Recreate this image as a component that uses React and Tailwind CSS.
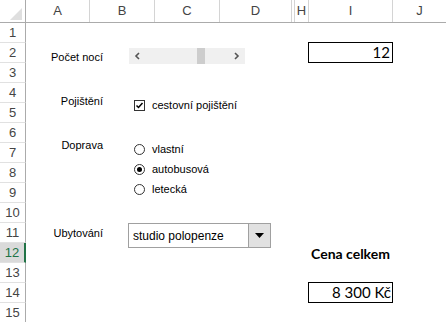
import React from "react";

const cols = [
  { key: "A", w: "w-[64px]" },
  { key: "B", w: "w-[65px]" },
  { key: "C", w: "w-[65px]" },
  { key: "D", w: "w-[72px]" },
  { key: "", w: "w-[3px]" },
  { key: "H", w: "w-[14px]" },
  { key: "I", w: "w-[84px]" },
  { key: "J", w: "flex-1" },
];

const rows = Array.from({ length: 15 }, (_, i) => i + 1);

function Radio({ checked, label }) {
  return (
    <div className="flex items-center h-[20px]">
      <span className="w-[11px] h-[11px] rounded-full border border-[#333] bg-white flex items-center justify-center">
        {checked && <span className="w-[5px] h-[5px] rounded-full bg-black" />}
      </span>
      <span className="ml-[7px] text-[11px] text-black">{label}</span>
    </div>
  );
}

export default function App() {
  return (
    <div className="w-[446px] h-[322px] bg-white overflow-hidden font-['Liberation_Sans',Arial,sans-serif] text-black">
      {/* column headers */}
      <div className="flex h-[23px] border-b border-[#ababab]">
        <div className="w-[26px] border-r border-[#ababab] relative">
          <div className="absolute right-[3px] bottom-[2px] w-0 h-0 border-l-[12px] border-l-transparent border-b-[12px] border-b-[#dfdfdf]" />
        </div>
        {cols.map((c, i) => (
          <div
            key={i}
            className={`${c.w} ${c.key === "J" ? "" : "border-r border-[#d4d4d4]"} flex items-center justify-center text-[13px] text-[#444]`}
          >
            {c.key}
          </div>
        ))}
      </div>

      <div className="flex">
        {/* row headers */}
        <div className="w-[26px] flex flex-col">
          {rows.map((r) => (
            <div
              key={r}
              className={`h-[20px] border-b border-[#e1e1e1] flex items-center justify-center text-[13px] ${
                r === 12
                  ? "bg-[#dadada] text-[#217346] border-r-2 border-r-[#217346]"
                  : "text-[#444] border-r border-r-[#ababab]"
              }`}
            >
              {r}
            </div>
          ))}
        </div>

        {/* sheet */}
        <div className="flex-1 relative">
          <div className="flex flex-col">
            {rows.map((r) => (
              <div key={r} className="h-[20px] flex">
                <div className="w-[282px] shrink-0" />
                {r === 2 && (
                  <div className="w-[85px] h-[21px] -mt-[1px] border border-black flex items-center justify-end pr-[2px] font-['Lato',sans-serif] text-[15px]">
                    12
                  </div>
                )}
                {r === 12 && (
                  <div className="w-[85px] h-[20px] flex items-center justify-center font-['Lato',sans-serif] font-bold text-[14px]">
                    Cena celkem
                  </div>
                )}
                {r === 14 && (
                  <div className="w-[85px] h-[21px] -mt-[1px] border border-black flex items-center justify-end pr-[1px] font-['Lato',sans-serif] text-[15px]">
                    8 300 Kč
                  </div>
                )}
              </div>
            ))}
          </div>

          {/* floating form controls */}
          <div className="absolute left-0 top-[27px] w-[77px] text-right text-[11px] leading-[14px]">Počet nocí</div>
          <div className="absolute left-[103px] top-[25px] w-[116px] h-[16px] bg-[#f0f0f0] flex items-center justify-between px-[5px]">
            <svg width="6" height="8" viewBox="0 0 6 8">
              <path d="M5 1 L2 4 L5 7" fill="none" stroke="#555" strokeWidth="1.6" />
            </svg>
            <svg width="6" height="8" viewBox="0 0 6 8">
              <path d="M1 1 L4 4 L1 7" fill="none" stroke="#555" strokeWidth="1.6" />
            </svg>
            <div className="absolute left-[68px] top-0 w-[8px] h-[16px] bg-[#cdcdcd]" />
          </div>

          <div className="absolute left-0 top-[71px] w-[77px] text-right text-[11px] leading-[14px]">Pojištění</div>
          <div className="absolute left-[108px] top-[75px] flex items-center h-[14px]">
            <span className="w-[11px] h-[11px] border border-[#333] bg-white flex items-center justify-center">
              <svg width="9" height="9" viewBox="0 0 9 9">
                <path d="M1.5 4.5 L3.5 6.5 L7.5 2" fill="none" stroke="#000" strokeWidth="1.5" />
              </svg>
            </span>
            <span className="ml-[7px] text-[11px]">cestovní pojištění</span>
          </div>

          <div className="absolute left-0 top-[115px] w-[77px] text-right text-[11px] leading-[14px]">Doprava</div>
          <div className="absolute left-[108px] top-[116px] flex flex-col">
            <Radio label="vlastní" />
            <Radio checked label="autobusová" />
            <Radio label="letecká" />
          </div>

          <div className="absolute left-0 top-[203px] w-[77px] text-right text-[11px] leading-[14px]">Ubytování</div>
          <div className="absolute left-[102px] top-[200px] w-[143px] h-[25px] border border-[#a0a0a0] bg-white flex">
            <div className="flex-1 flex items-center pl-[4px] text-[12px]">studio polopenze</div>
            <div className="w-[22px] h-full border-l border-[#a0a0a0] bg-[#e1e1e1] flex items-center justify-center">
              <svg width="9" height="6" viewBox="0 0 9 6">
                <path d="M0 0 L9 0 L4.5 5 Z" fill="#000" />
              </svg>
            </div>
          </div>
        </div>
      </div>
    </div>
  );
}
